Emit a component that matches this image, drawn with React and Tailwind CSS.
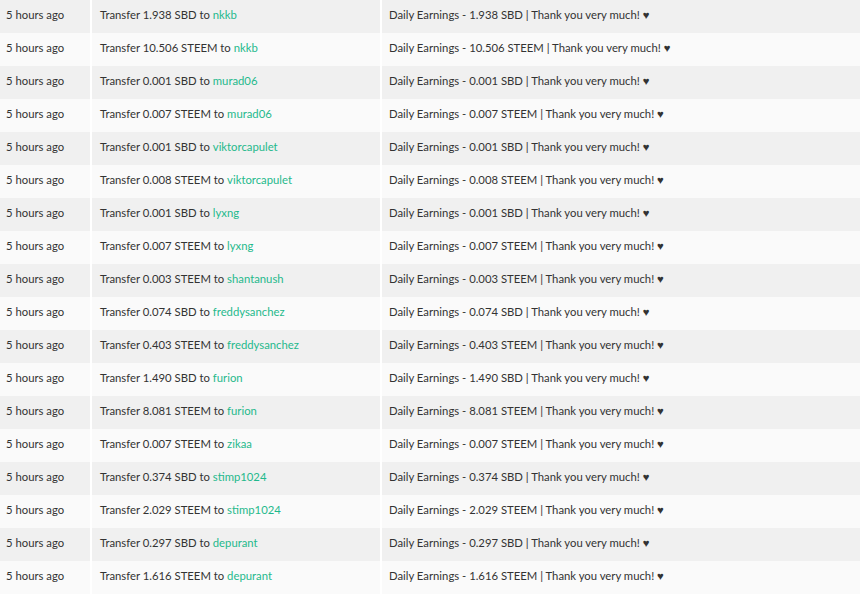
import React from 'react';

const rows = [
  ['1.938', 'SBD', 'nkkb'],
  ['10.506', 'STEEM', 'nkkb'],
  ['0.001', 'SBD', 'murad06'],
  ['0.007', 'STEEM', 'murad06'],
  ['0.001', 'SBD', 'viktorcapulet'],
  ['0.008', 'STEEM', 'viktorcapulet'],
  ['0.001', 'SBD', 'lyxng'],
  ['0.007', 'STEEM', 'lyxng'],
  ['0.003', 'STEEM', 'shantanush'],
  ['0.074', 'SBD', 'freddysanchez'],
  ['0.403', 'STEEM', 'freddysanchez'],
  ['1.490', 'SBD', 'furion'],
  ['8.081', 'STEEM', 'furion'],
  ['0.007', 'STEEM', 'zikaa'],
  ['0.374', 'SBD', 'stimp1024'],
  ['2.029', 'STEEM', 'stimp1024'],
  ['0.297', 'SBD', 'depurant'],
  ['1.616', 'STEEM', 'depurant'],
];

export default function App() {
  return (
    <div className="w-[860px] h-[596px] overflow-hidden bg-white text-[11.3px] text-[#333]" style={{ fontFamily: 'Lato, "Open Sans", sans-serif' }}>
      {rows.map(([amt, cur, user], i) => (
        <div key={i} className={`flex h-[33px] items-center ${i % 2 === 0 ? 'bg-[#f0f0f0]' : 'bg-[#fafafa]'}`}>
          <div className="w-[92px] h-full flex items-center pb-[2px] pl-[6px] border-r-2 border-white">5 hours ago</div>
          <div className="w-[290px] h-full flex items-center pb-[2px] pl-[8px] border-r-2 border-white">
            Transfer {amt} {cur} to&nbsp;<span className="text-[#1fb98c]">{user}</span>
          </div>
          <div className="flex-1 pl-[7px] pb-[2px]">
            Daily Earnings - {amt} {cur} | Thank you very much! ♥
          </div>
        </div>
      ))}
    </div>
  );
}
